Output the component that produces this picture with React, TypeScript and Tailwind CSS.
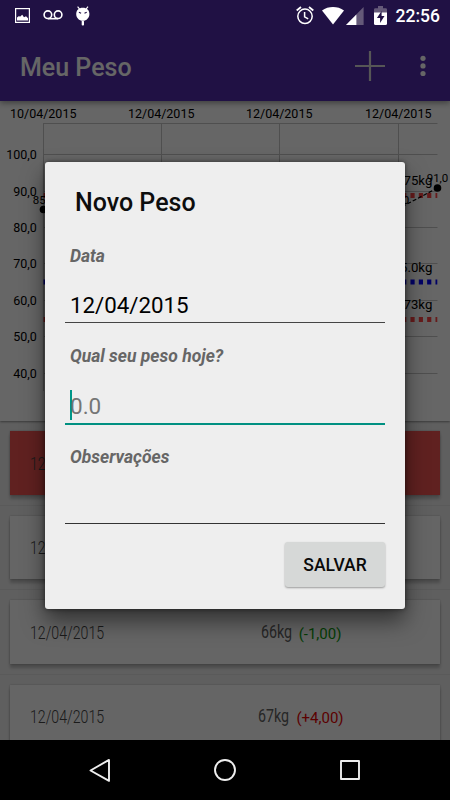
import React from 'react'

interface Entry {
  date: string
  weight: string
  diff: string
  highlight?: boolean
  gain?: boolean
}

const entries: Entry[] = [
  { date: '12/04/2015', weight: '91kg', diff: '(+25,00)', highlight: true, gain: true },
  { date: '12/04/2015', weight: '66kg', diff: '(-1,00)' },
  { date: '12/04/2015', weight: '66kg', diff: '(-1,00)' },
  { date: '12/04/2015', weight: '67kg', diff: '(+4,00)', gain: true },
]

const yTicks = [
  { label: '100,0', y: 53.5 },
  { label: '90,0', y: 90.5 },
  { label: '80,0', y: 126.5 },
  { label: '70,0', y: 162.5 },
  { label: '60,0', y: 199.5 },
  { label: '50,0', y: 235.5 },
  { label: '40,0', y: 272.5 },
]

const xTicks = [
  { label: '10/04/2015', x: 43.5 },
  { label: '12/04/2015', x: 161.5 },
  { label: '12/04/2015', x: 279.5 },
  { label: '12/04/2015', x: 398.5 },
]

const limits = [
  { label: '75kg', y: 94.5, color: '#ff4444' },
  { label: '65.0kg', y: 181, color: '#0000ff' },
  { label: '73kg', y: 218.5, color: '#ff4444' },
]

const StatusBar: React.FC = () => (
  <div className="absolute inset-x-0 top-0 flex h-[30px] items-center justify-between pr-[10px] pl-[15px] text-white">
    <div className="flex h-full items-center">
      <svg width="15" height="15" viewBox="0 0 15 15" className="mt-[1px]">
        <rect x="0.6" y="0.6" width="13.8" height="13.8" fill="none" stroke="currentColor" strokeWidth="1.2" />
        <path d="M2 12.5V9.5l2-1.5 1 .7 2.2-2 1.8 2.5 2-1 2 2v2.3z" fill="currentColor" />
      </svg>
      <svg width="20" height="10" viewBox="0 0 20 10" className="ml-[12.5px]" fill="none" stroke="currentColor" strokeWidth="1.6">
        <circle cx="4.9" cy="4.7" r="3.8" />
        <circle cx="15.1" cy="4.7" r="3.8" />
        <path d="M4.9 8.7h10.2" />
      </svg>
      <svg width="14" height="20" viewBox="0 0 14 20" className="ml-[13px] mt-[2px]">
        <path d="M1.6.6l2 2.6M12 .6l-2 2.6" stroke="currentColor" strokeWidth="1.1" />
        <path d="M6.8 1.7C10.8 1.7 13.4 4 13.4 8c0 3.8-2.8 6.8-6.6 6.8S.2 11.8.2 8C.2 4 2.8 1.7 6.8 1.7z" fill="currentColor" />
        <rect x="5.7" y="14.7" width="2.3" height="4.8" rx=".8" fill="currentColor" />
        <path d="M2.9 6.3l2.2.9M10.7 6.3l-2.2.9" stroke="#211144" strokeWidth="1.2" />
      </svg>
    </div>
    <div className="flex h-full items-center">
      <svg width="18" height="19" viewBox="0 0 18 19" fill="none" stroke="currentColor" className="mt-[1px]">
        <circle cx="9" cy="10.3" r="7.2" strokeWidth="1.5" />
        <path d="M8.6 6v4.8l3.6 2.1" strokeWidth="1.5" />
        <path d="M.7 4.5L5 1M17.3 4.5L13 1" strokeWidth="1.8" />
      </svg>
      <svg width="22" height="18" viewBox="0 0 22 18" className="mt-[1px] ml-[8px]">
        <path d="M0 3.5C6.3-1.1 15.7-1.1 22 3.5L11 17.5z" fill="currentColor" />
      </svg>
      <svg width="18" height="18" viewBox="0 0 18 18" className="mt-[1px] ml-[2px]">
        <path d="M17.6 0v18H0z" fill="#645978" />
        <path d="M10.4 7.4V18H0z" fill="currentColor" />
      </svg>
      <svg width="13" height="19" viewBox="0 0 13 19" className="ml-[10px]">
        <path d="M0 3.6q0-1.300 1.300-1.300H4V0h5v2.300h2.700q1.300 0 1.300 1.300V7H0z" fill="#645978" />
        <path d="M0 6.5h13v11q0 1.500-1.500 1.500h-10Q0 19 0 17.500z" fill="currentColor" />
        <path d="M7.6 5L2.9 12h3.2v5l4.4-7H7.6z" fill="#211144" />
      </svg>
      <span className="mt-[2px] ml-[8.5px] text-[17.5px] leading-[30px] font-medium">22:56</span>
    </div>
  </div>
)

const Chart: React.FC = () => (
  <svg width="450" height="320" viewBox="0 0 450 320" className="block" fontSize="12.5" fill="#000">
    <g stroke="#c6c6c6" strokeWidth="1">
      <path d="M43 22.5H437.5" />
      {yTicks.map((t) => (
        <path key={t.label} d={`M43 ${t.y}H437.5`} />
      ))}
      {xTicks.map((t) => (
        <path key={t.x} d={`M${t.x} 22V290`} />
      ))}
    </g>
    {xTicks.map((t) => (
      <text key={t.x} x={t.x - 0.3} y="17" textAnchor="middle">{t.label}</text>
    ))}
    {yTicks.map((t) => (
      <text key={t.label} x="36.8" y={t.y + 4} textAnchor="end">{t.label}</text>
    ))}
    {limits.map((l) => (
      <g key={l.y}>
        <path d={`M43.5 ${l.y}H437.3`} stroke={l.color} strokeWidth="5" strokeDasharray="4.17 4.17" />
        <text x="432.3" y={l.y - 10.5} textAnchor="end" fontSize="13.2">{l.label}</text>
      </g>
    ))}
    <path d="M437.5 87L398.5 107.5L279.5 180L161.5 150L43.5 108.5" fill="none" stroke="#000" strokeWidth="1.2" strokeDasharray="4 2" />
    <circle cx="43.5" cy="108.5" r="3.8" />
    <circle cx="398.5" cy="107.5" r="3.8" />
    <circle cx="437.5" cy="87" r="3.8" />
    <g fontSize="11.5" textAnchor="middle">
      <text x="43.5" y="102.5">85,0</text>
      <text x="398.5" y="102.5">86,0</text>
      <text x="437.5" y="80.5">91,0</text>
    </g>
  </svg>
)

const EntryRow: React.FC<{ entry: Entry }> = ({ entry }) => (
  <div className="h-[84.5px] shrink-0 border-b border-[#e0e0e0] px-[10px] pt-[10px]">
    <div
      className={`flex h-[63.5px] items-center pt-[2px] pl-[20px] shadow-[0_4px_3px_rgba(0,0,0,0.22),0_0_2px_rgba(0,0,0,0.25)] ${
        entry.highlight ? 'bg-[#ef5350]' : 'bg-[#fcfcfc]'
      }`}
    >
      <div className="w-[140px]">
        <span className="inline-block origin-left scale-x-[0.81] text-[17.5px] font-light text-[#444]">{entry.date}</span>
      </div>
      <div className="flex flex-1 items-center justify-center pr-[8px]">
        <span className="w-[32px] whitespace-nowrap">
          <span className="inline-block origin-left scale-x-[0.77] text-[18.5px] text-[#616161]">{entry.weight}</span>
        </span>
        <span className={`ml-[6px] pt-[2px] text-[15px] ${entry.gain ? 'text-[#e50000]' : 'text-[#0b9a0b]'}`}>{entry.diff}</span>
      </div>
    </div>
  </div>
)

const FieldLabel: React.FC<{ children: React.ReactNode }> = ({ children }) => (
  <label className="block h-[24px] pl-[5px] text-[17.5px] leading-[24px] font-bold whitespace-nowrap text-[#666] italic">
    {children}
  </label>
)

const NewWeightDialog: React.FC = () => (
  <div className="absolute top-[162px] left-[45px] h-[447px] w-[360px] rounded-[3px] bg-[#eee] px-[20px] shadow-[0_12px_22px_rgba(0,0,0,0.5),0_0_5px_rgba(0,0,0,0.5)]">
    <h2 className="pt-[25px] pl-[10px] text-[25px] leading-[32px] font-medium text-[#0d0d0d]">Novo Peso</h2>
    <div className="mt-[25px]">
      <FieldLabel>Data</FieldLabel>
      <div className="mt-[18px] h-[37px] border-b border-[#444] pl-[5px] text-[22.3px] leading-[39px] text-black">12/04/2015</div>
    </div>
    <div className="mt-[21px]">
      <FieldLabel>Qual seu peso hoje?</FieldLabel>
      <div className="mt-[18px] flex h-[39px] items-center border-b-[2px] border-[#009081] pt-[1px] pl-[5px] text-[22.5px] text-[#757575]">
        <span className="-mr-[2px] h-[30px] w-[2px] bg-[#009688]" />
        <span className="pt-[3px]">0.0</span>
      </div>
    </div>
    <div className="mt-[20px]">
      <FieldLabel>Observações</FieldLabel>
      <div className="mt-[18px] h-[37px] border-b border-[#333]" />
    </div>
    <div className="mt-[18px] flex justify-end">
      <button className="h-[45px] w-[100px] rounded-[3px] bg-[#d6d8d7] pt-[1px] text-[17.5px] font-medium text-[#0a0a0a] shadow-[0_1px_2px_rgba(0,0,0,0.35)]">
        SALVAR
      </button>
    </div>
  </div>
)

export default function App() {
  return (
    <div className="relative flex h-[800px] w-[450px] flex-col overflow-hidden bg-[#eee] font-[Roboto,sans-serif]">
      <header className="relative z-10 flex h-[101px] shrink-0 items-center bg-[#522bab] pt-[33px] pr-[24.5px] pl-[20px] shadow-[0_2px_6px_rgba(0,0,0,0.4)]">
        <h1 className="flex-1 pt-[1px] text-[25px] font-medium text-white">Meu Peso</h1>
        <svg width="30" height="30" viewBox="0 0 30 30" className="-mt-[2px]" stroke="#d8d8d8" strokeWidth="2.2">
          <path d="M15 0v30M0 15h30" />
        </svg>
        <svg width="6" height="22" viewBox="0 0 6 22" className="-mt-[2px] ml-[34.5px]" fill="#fff">
          <circle cx="3" cy="3.3" r="2.6" />
          <circle cx="3" cy="10.9" r="2.6" />
          <circle cx="3" cy="18.5" r="2.6" />
        </svg>
      </header>
      <section className="z-[1] h-[320px] shrink-0 bg-white shadow-[0_1px_2px_rgba(0,0,0,0.4)]">
        <Chart />
      </section>
      <main className="min-h-0 flex-1 overflow-hidden">
        {entries.map((entry, i) => (
          <EntryRow key={i} entry={entry} />
        ))}
      </main>
      <div className="absolute inset-0 z-20 bg-black/60">
        <StatusBar />
        <NewWeightDialog />
      </div>
      <nav className="z-30 flex h-[60px] shrink-0 items-center justify-center gap-[100px] bg-black">
        <svg width="25" height="25" viewBox="0 0 25 25" fill="none" stroke="#eee" strokeWidth="1.9" strokeLinejoin="round">
          <path d="M21 1.900v21L2.500 12.500z" />
        </svg>
        <svg width="25" height="25" viewBox="0 0 25 25" fill="none" stroke="#eee" strokeWidth="1.9">
          <circle cx="12" cy="12" r="10" />
        </svg>
        <svg width="25" height="25" viewBox="0 0 25 25" fill="none" stroke="#eee" strokeWidth="1.9" strokeLinejoin="round">
          <rect x="3" y="3" width="18" height="18" />
        </svg>
      </nav>
    </div>
  )
}
